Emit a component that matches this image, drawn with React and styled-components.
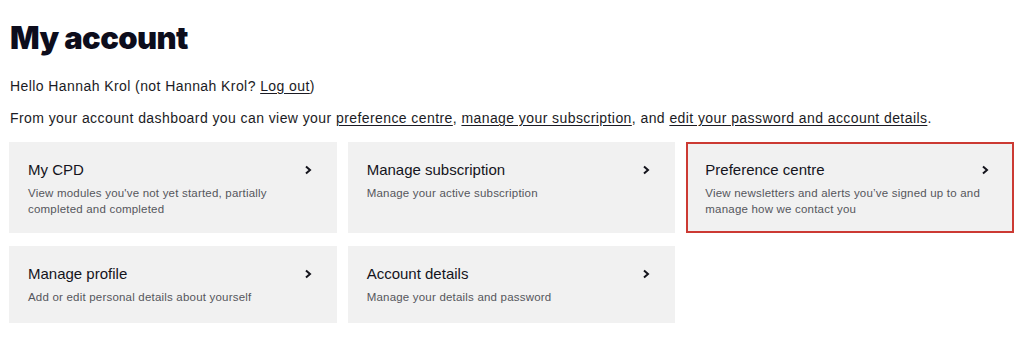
import React from "react";
import styled, { createGlobalStyle } from "styled-components";

const GlobalStyle = createGlobalStyle`
  body {
    margin: 0;
    background: #ffffff;
    font-family: "Liberation Sans", Arial, sans-serif;
    color: #1b1b24;
  }
`;

const Page = styled.div`
  padding: 18px 10px 0 9px;
`;

const Title = styled.h1`
  margin: 0 0 0 1px;
  font-family: Inter, "Liberation Sans", sans-serif;
  font-size: 31px;
  font-weight: 900;
  letter-spacing: -0.6px;
  line-height: 40px;
  color: #0d0d1c;
`;

const Text = styled.p`
  margin: ${(p) => p.$top || 0}px 0 0 1px;
  font-size: 14px;
  line-height: 20px;
  letter-spacing: 0.42px;
`;

const Link = styled.a`
  color: inherit;
  text-decoration: underline;
  text-underline-offset: 2px;
`;

const Grid = styled.div`
  margin-top: 14px;
  display: grid;
  grid-template-columns: repeat(3, 1fr);
  column-gap: 11px;
  row-gap: 13px;
`;

const Card = styled.div`
  background: #f1f1f1;
  padding: 16px 23px ${(p) => (p.$short ? 16 : 14)}px 17px;
  border: 2px solid ${(p) => (p.$active ? "#cc3a33" : "transparent")};
  display: flex;
  flex-direction: column;
  gap: 5px;
`;

const CardHead = styled.div`
  display: flex;
  align-items: center;
  justify-content: space-between;
`;

const CardTitle = styled.span`
  font-size: 15px;
  line-height: 20px;
  color: #14141c;
`;

const CardText = styled.span`
  font-size: 11.5px;
  line-height: 16px;
  letter-spacing: 0.2px;
  color: #55565c;
  max-width: 275px;
`;

const Chevron = () => (
  <svg width="8" height="10" viewBox="0 0 8 10">
    <polyline points="2,1.5 6,5 2,8.5" fill="none" stroke="#14141c" strokeWidth="2" />
  </svg>
);

const cards = [
  { title: "My CPD", text: "View modules you've not yet started, partially completed and completed" },
  { title: "Manage subscription", text: "Manage your active subscription" },
  { title: "Preference centre", text: "View newsletters and alerts you’ve signed up to and manage how we contact you", active: true },
  { title: "Manage profile", text: "Add or edit personal details about yourself", short: true },
  { title: "Account details", text: "Manage your details and password", short: true },
];

function App() {
  return (
    <Page>
      <GlobalStyle />
      <Title>My account</Title>
      <Text $top={18}>
        Hello Hannah Krol (not Hannah Krol? <Link href="#">Log out</Link>)
      </Text>
      <Text $top={12}>
        From your account dashboard you can view your <Link href="#">preference centre</Link>,{" "}
        <Link href="#">manage your subscription</Link>, and{" "}
        <Link href="#">edit your password and account details</Link>.
      </Text>
      <Grid>
        {cards.map((c) => (
          <Card key={c.title} $active={c.active} $short={c.short}>
            <CardHead>
              <CardTitle>{c.title}</CardTitle>
              <Chevron />
            </CardHead>
            <CardText>{c.text}</CardText>
          </Card>
        ))}
      </Grid>
    </Page>
  );
}

export default App;
